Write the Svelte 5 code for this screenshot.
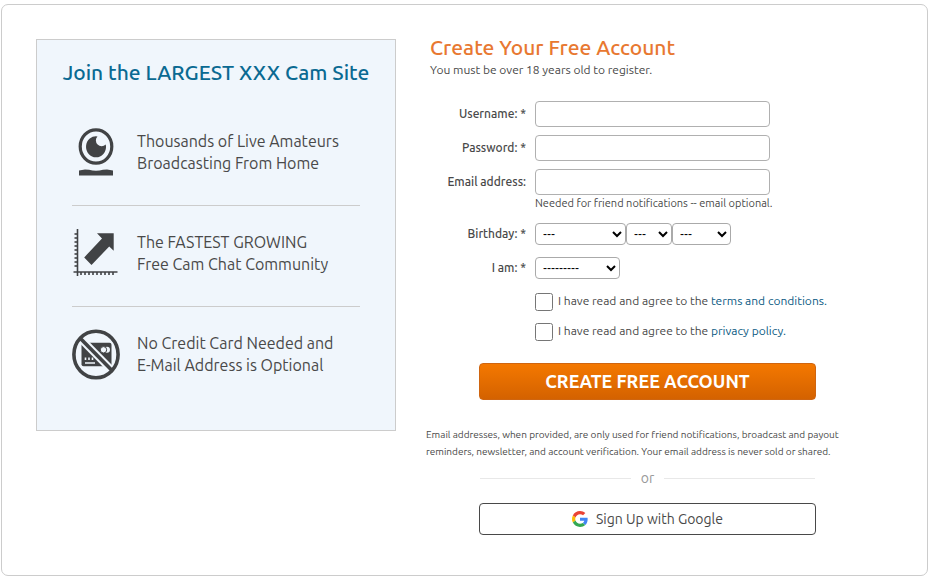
<script>
  const months = ['January', 'February', 'March', 'April', 'May', 'June', 'July',
    'August', 'September', 'October', 'November', 'December'];
  const days = Array.from({ length: 31 }, (_, i) => i + 1);
  const years = Array.from({ length: 80 }, (_, i) => 2005 - i);
  const xTicks = [21, 25, 29, 33, 37, 41, 45, 49, 53];
  const yTicks = [14, 18, 22, 26, 30, 34, 38, 42, 46];
</script>

<main class="card">
  <aside class="promo">
    <h2>Join the LARGEST XXX Cam Site</h2>
    <ul>
      <li>
        <svg width="48" height="52" viewBox="0 0 48 52" aria-hidden="true">
          <ellipse cx="24" cy="20.5" rx="15.800" ry="16.700" fill="none" stroke="#414345" stroke-width="3.2" />
          <path d="M25.500 10.400A10 10.500 0 1 0 34 20q-.2-.8-.3-1.600a5 5 0 0 1-8.200-8z" fill="#414345" />
          <path d="M7 49.500v-5l6-1 4 .2q7 2.200 14 0l4-.2 6 1v5z" fill="#414345" />
        </svg>
        <span>Thousands of Live Amateurs<br />Broadcasting From Home</span>
      </li>
      <li>
        <svg width="48" height="52" viewBox="12 7 48 52" aria-hidden="true">
          <g stroke="#414345" fill="none" stroke-width="1.6">
            <path d="M17.500 9v47M13.500 52h44" />
            {#each yTicks as y}<path d="M14.500 {y}h3" />{/each}
            {#each xTicks as x}<path d="M{x} 52v3" />{/each}
          </g>
          <path d="M37 13.200h16.700v17.600l-4.500-4.300L31.500 45l-7.300-7.600L42 18.500z" fill="#414345" />
        </svg>
        <span>The FASTEST GROWING<br />Free Cam Chat Community</span>
      </li>
      <li>
        <svg width="48" height="52" viewBox="0 0 48 52" aria-hidden="true">
          <rect x="9.500" y="14.700" width="30" height="23.500" rx="2" fill="#414345" />
          <circle cx="35" cy="21.800" r="3" fill="#f0f6fc" />
          <circle cx="31.500" cy="21.800" r="3.200" fill="#f0f6fc" stroke="#414345" />
          <path d="M13.500 29.500v2.500M17 29.500v2.500M20.500 29.500v2.500M13 35h10" stroke="#f0f6fc" stroke-width="1.6" />
          <path d="M7.500 9.500L41 43.500" stroke="#f0f6fc" stroke-width="7.500" />
          <path d="M7.500 9.500L41 43.500" stroke="#414345" stroke-width="3.600" />
          <ellipse cx="24" cy="26.500" rx="22.100" ry="23.300" fill="none" stroke="#414345" stroke-width="3.600" />
        </svg>
        <span>No Credit Card Needed and<br />E-Mail Address is Optional</span>
      </li>
    </ul>
  </aside>

  <section class="signup">
    <h1>Create Your Free Account</h1>
    <p class="age">You must be over 18 years old to register.</p>
    <form onsubmit={(e) => e.preventDefault()}>
      <div class="row">
        <label for="username">Username: *</label>
        <input class="text" id="username" type="text" />
      </div>
      <div class="row">
        <label for="password">Password: *</label>
        <input class="text" id="password" type="password" />
      </div>
      <div class="row">
        <label for="email">Email address:</label>
        <input class="text" id="email" type="email" aria-describedby="email-hint" />
      </div>
      <p class="hint" id="email-hint">Needed for friend notifications -- email optional.</p>
      <div class="row short">
        <label for="month">Birthday: *</label>
        <div class="selects">
          <select class="month" id="month">
            <option>---</option>
            {#each months as m}<option>{m}</option>{/each}
          </select>
          <select class="day" aria-label="Day">
            <option>---</option>
            {#each days as d}<option>{d}</option>{/each}
          </select>
          <select class="year" aria-label="Year">
            <option>---</option>
            {#each years as y}<option>{y}</option>{/each}
          </select>
        </div>
      </div>
      <div class="row short">
        <label for="gender">I am: *</label>
        <select class="gender" id="gender">
          <option>---------</option>
          <option>a man</option>
          <option>a woman</option>
          <option>a couple</option>
        </select>
      </div>
      <div class="agreements">
        <div class="agree">
          <input type="checkbox" id="terms" />
          <label for="terms">I have read and agree to the <a href="#terms">terms and conditions.</a></label>
        </div>
        <div class="agree">
          <input type="checkbox" id="privacy" />
          <label for="privacy">I have read and agree to the <a href="#privacy">privacy policy.</a></label>
        </div>
      </div>
      <button class="create" type="submit">CREATE FREE ACCOUNT</button>
      <p class="note">
        Email addresses, when provided, are only used for friend notifications, broadcast and payout<br />
        reminders, newsletter, and account verification. Your email address is never sold or shared.
      </p>
      <div class="or"><span>or</span></div>
      <button class="google" type="button">
        <svg width="16" height="16" viewBox="0 0 48 48" aria-hidden="true">
          <path fill="#EA4335" d="M24 9.500c3.540 0 6.710 1.220 9.210 3.600l6.850-6.850C35.900 2.380 30.470 0 24 0 14.620 0 6.510 5.380 2.560 13.220l7.980 6.190C12.430 13.720 17.740 9.500 24 9.500z" />
          <path fill="#4285F4" d="M46.980 24.550c0-1.570-.15-3.090-.38-4.550H24v9.020h12.940c-.58 2.960-2.260 5.480-4.780 7.180l7.730 6c4.510-4.180 7.090-10.360 7.090-17.650z" />
          <path fill="#FBBC05" d="M10.530 28.590A14.500 14.500 0 0 1 9.770 24c0-1.600.27-3.140.76-4.590l-7.980-6.190A24 24 0 0 0 0 24c0 3.880.92 7.540 2.560 10.780z" />
          <path fill="#34A853" d="M24 48c6.480 0 11.930-2.130 15.890-5.810l-7.730-6c-2.150 1.450-4.920 2.300-8.160 2.300-6.260 0-11.570-4.220-13.470-9.910l-7.980 6.190C6.510 42.620 14.620 48 24 48z" />
        </svg>
        Sign Up with Google
      </button>
    </form>
  </section>
</main>

<style>
  .card {
    box-sizing: border-box;
    display: flex;
    align-items: flex-start;
    gap: 30px;
    margin: 4px 7px 5px 1px;
    padding: 34px 34px 40px;
    border: 1px solid #ccc;
    border-radius: 7px;
    background: #fff;
    color: #494949;
    font-family: Ubuntu, 'Open Sans', 'Noto Sans', sans-serif;
  }

  h1, h2, p, ul {
    margin: 0;
    padding: 0;
  }

  button, select, input {
    box-sizing: border-box;
    margin: 0;
    font-family: inherit;
  }

  a {
    color: #0a5a83;
    text-decoration: none;
  }

  .promo {
    flex: 0 0 360px;
    box-sizing: border-box;
    padding: 18px 35px 23px;
    border: 1px solid #ccc;
    background: #f0f6fc;
  }

  .promo h2 {
    margin: 0 -20px 19px;
    color: #0a6a92;
    font-size: 21px;
    font-weight: 500;
    line-height: 28px;
    text-align: center;
    white-space: nowrap;
  }

  .promo li {
    box-sizing: border-box;
    display: flex;
    align-items: center;
    gap: 17px;
    height: 101px;
    padding-bottom: 6px;
    list-style: none;
    font-size: 16px;
    line-height: 22px;
    white-space: nowrap;
  }

  .promo li:not(:last-child) {
    border-bottom: 1px solid #ccc;
  }

  .promo li:last-child {
    height: 100px;
  }

  .signup {
    flex: 1;
    min-width: 0;
  }

  h1 {
    margin-left: 4px;
    color: #e87831;
    font-size: 21px;
    font-weight: 500;
    line-height: 16px;
  }

  .age {
    margin: 5px 0 21px 4px;
    font-size: 12px;
    line-height: 20px;
  }

  .row {
    display: flex;
    align-items: flex-start;
    gap: 9px;
    margin-bottom: 8px;
  }

  .row label {
    flex: 0 0 100px;
    font-size: 12px;
    font-weight: 500;
    line-height: 26px;
    text-align: right;
  }

  .row.short {
    margin-bottom: 12px;
  }

  .row.short label {
    line-height: 22px;
  }

  .text {
    width: 235px;
    height: 26px;
    padding: 2px 6px;
    border: 1px solid #b0b0b0;
    border-radius: 4px;
    background: #fff;
    font-size: 13px;
  }

  .hint {
    margin: -8px 0 12px 109px;
    font-size: 11px;
    line-height: 16px;
  }

  .selects {
    display: flex;
  }

  select {
    height: 22px;
    padding: 0 4px 0 3px;
    border: 1px solid #aaa;
    border-radius: 4px;
    background: #fff;
    color: #000;
    font: 12px 'Liberation Sans', Arial, sans-serif;
  }

  .month {
    width: 91px;
  }

  .day {
    width: 46px;
  }

  .year {
    width: 59px;
  }

  .gender {
    width: 85px;
  }

  .agreements {
    margin: 14px 0 22px 109px;
  }

  .agree {
    display: flex;
    gap: 5px;
    height: 18px;
    margin-bottom: 12px;
    font-size: 12px;
    line-height: 16px;
  }

  .agree input {
    width: 18px;
    height: 18px;
  }

  .create, .google {
    display: block;
    width: 337px;
    margin-left: 53px;
    border-radius: 4px;
    cursor: pointer;
  }

  .create {
    height: 37px;
    padding: 0 0 2px;
    border: 1px solid #cf6510;
    background: linear-gradient(#f47800, #d46200);
    color: #fff;
    font-size: 18px;
    font-weight: 600;
  }

  .note {
    margin-top: 26px;
    font-size: 10px;
    line-height: 17px;
    white-space: nowrap;
  }

  .or {
    display: flex;
    align-items: center;
    gap: 10px;
    width: 335px;
    margin: 8px 0 15px 54px;
    color: #999;
    font-size: 14px;
    line-height: 20px;
  }

  .or::before, .or::after {
    flex: 1;
    height: 1px;
    background: #e8e8e8;
    content: '';
  }

  .google {
    display: flex;
    align-items: center;
    justify-content: center;
    gap: 8px;
    height: 32px;
    padding: 0;
    border: 1px solid #494949;
    background: #fff;
    color: #494949;
    font-size: 14px;
  }
</style>
